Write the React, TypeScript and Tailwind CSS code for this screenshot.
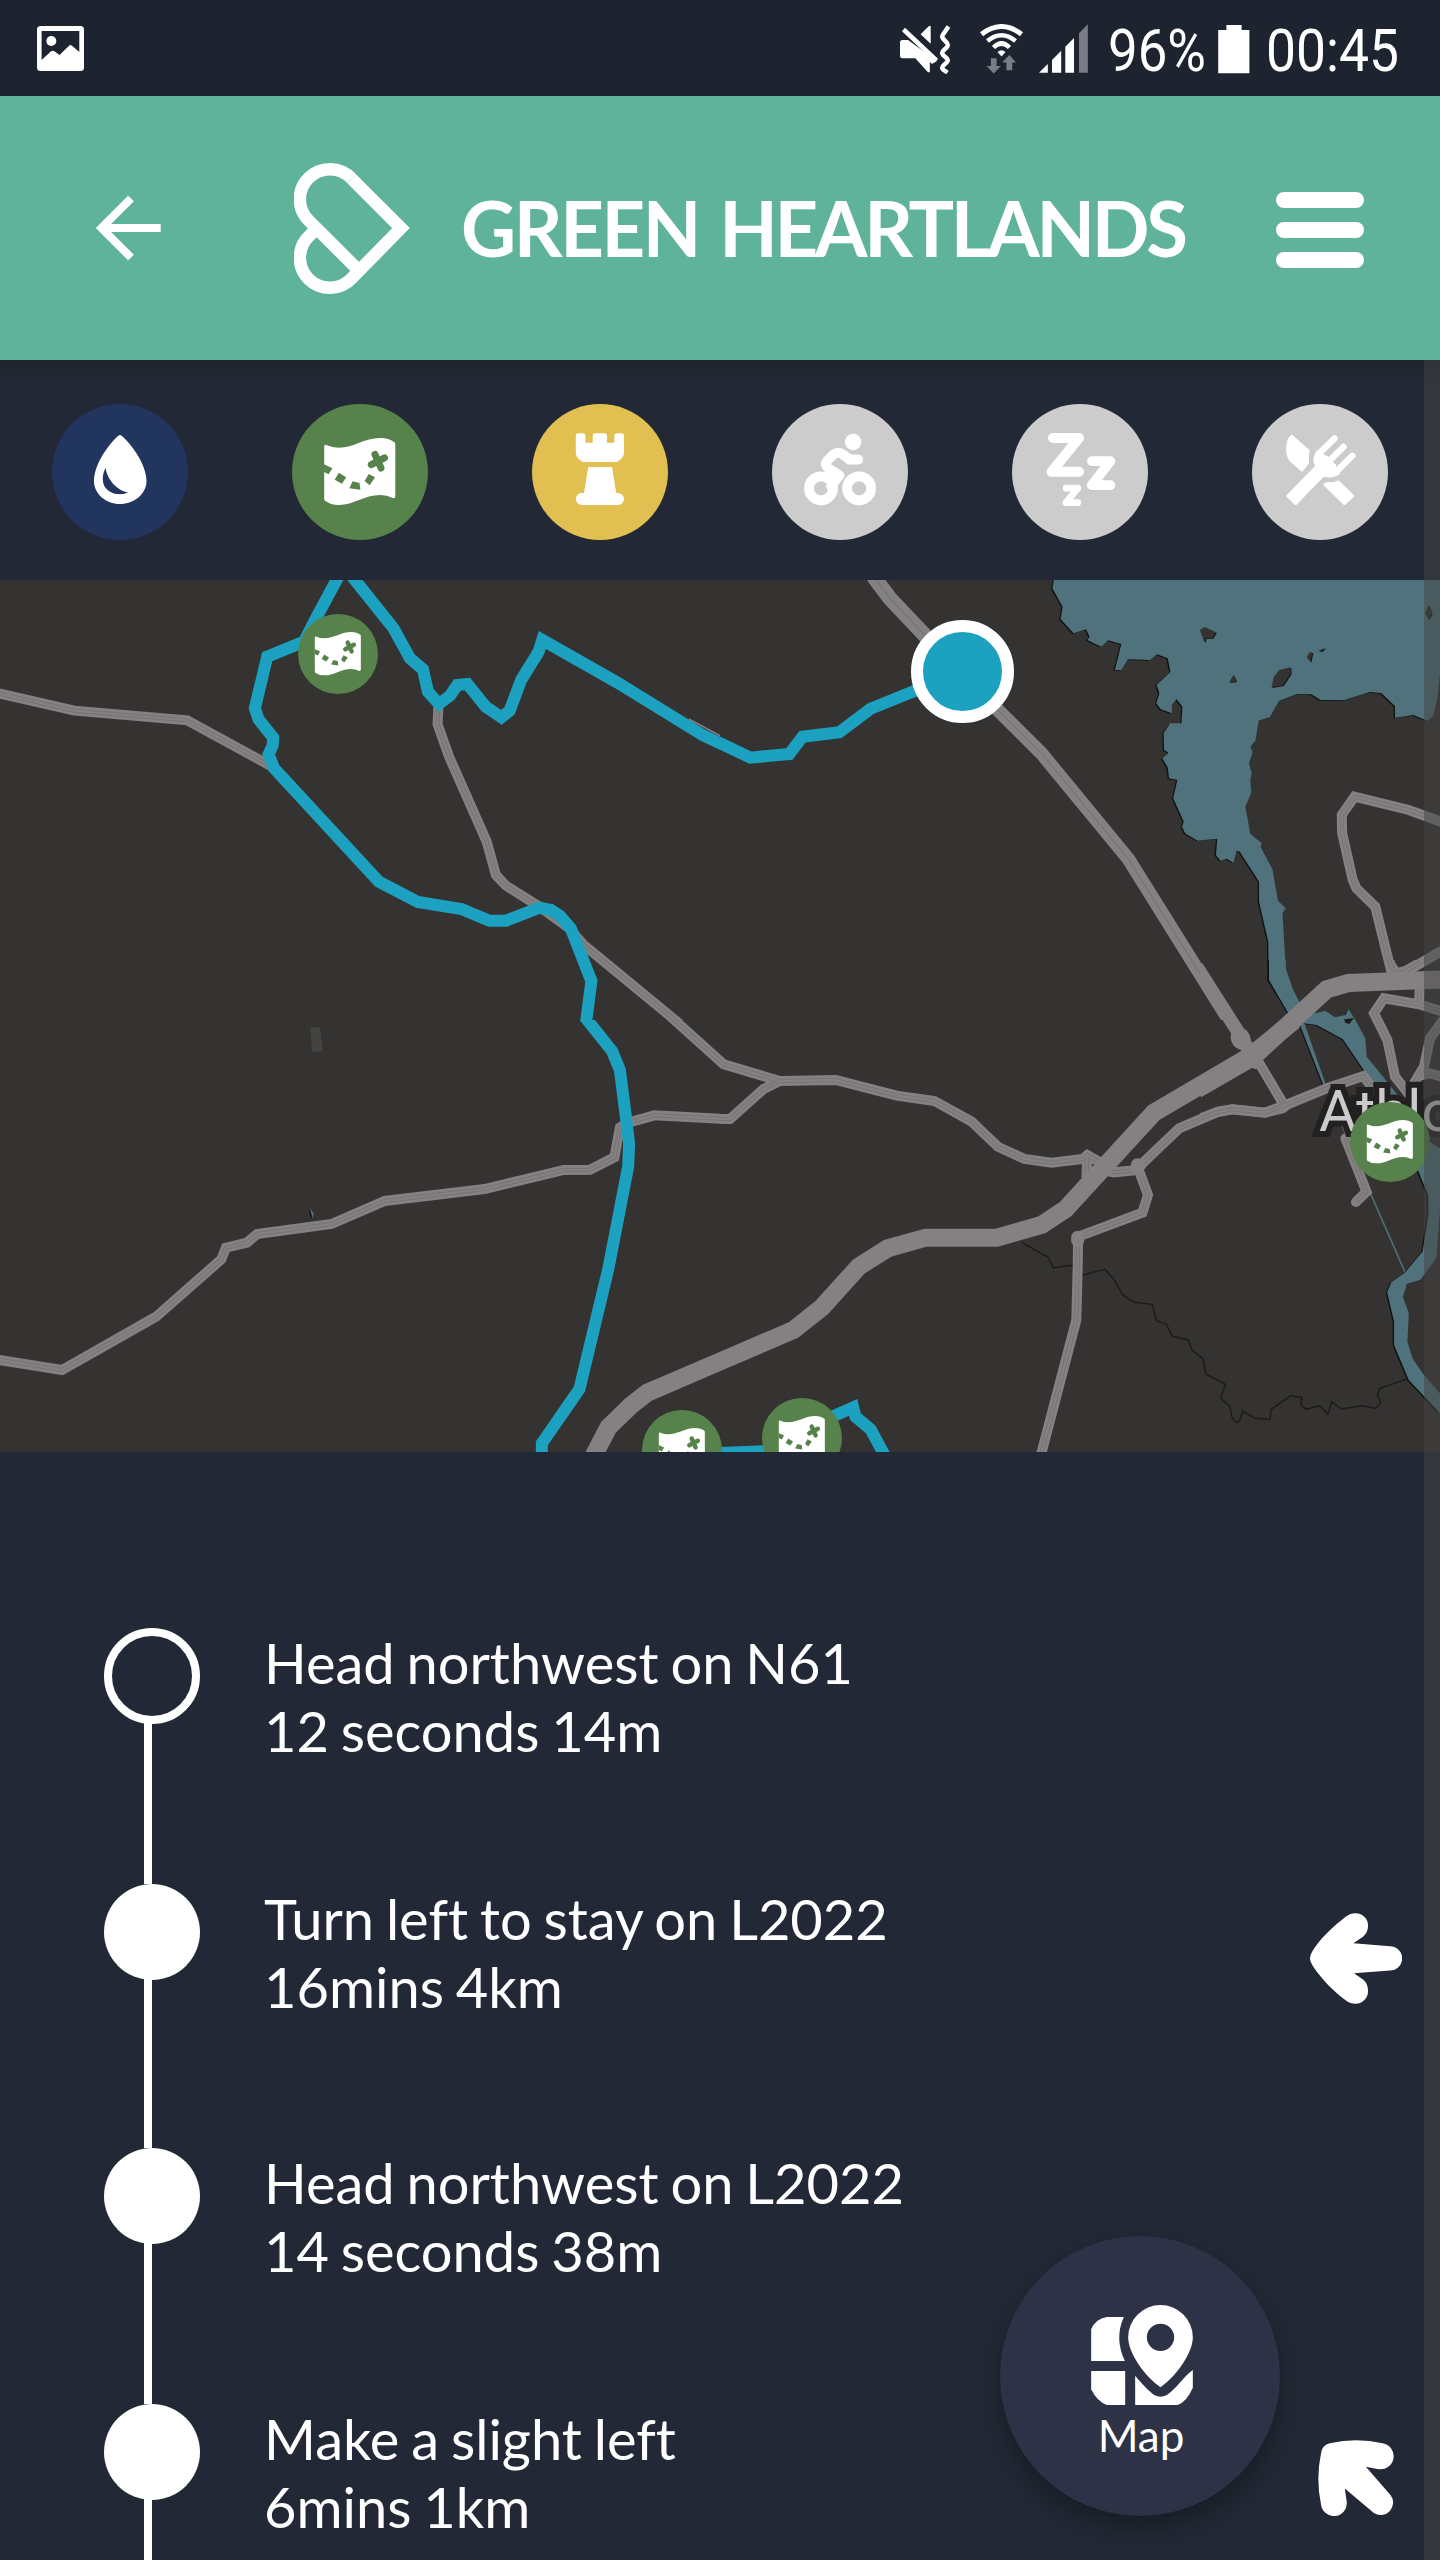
import React from "react";

type IconProps = { className?: string };

function DropIcon({ className }: IconProps) {
  return (
    <svg viewBox="0 0 136 136" className={className}>
      <path
        fillRule="evenodd"
        fill="#fff"
        d="M68 31C65 31 42 56 42 77C42 90 54 100 68 100S94.500 90 94.500 77C94.500 56 71 31 68 31ZM53.600 63.700C55 76 66 87 76.100 88.300C74 89.600 71 90.300 68 90.300C58 90.300 50.800 84 50.800 75.500C50.800 73 51 69 53.600 63.700Z"
      />
    </svg>
  );
}

function TreasureMapIcon({ className }: IconProps) {
  return (
    <svg viewBox="0 0 136 136" className={className}>
      <path
        fill="#fff"
        d="M32.200 42.500Q32.500 40 35 41.300Q40 43.700 46.800 43.700C62 43.700 72 34 88.200 34Q97 34 102.500 38.300Q103.300 39 103.300 40V92.500Q102.800 95.300 100.300 93.700Q95 91 88.200 91C72 91 62 101 46.800 101Q38.500 101 33 96.800Q32.200 96 32.200 95Z"
      />
      <g fill="#57824b">
        <path d="M32 60.300L40.400 64.300L36.700 70.300L32 68Z" />
        <path d="M46.800 68.700L54.200 73.300L50 79.700L42.700 75.700Z" />
        <path d="M60.600 77.300L67.500 79L68.400 85.700L57.400 84.300Z" />
        <path d="M76.700 70L83.100 73.300L77.600 81.300L72.600 77Z" />
      </g>
      <path
        d="M83 50.500L89 64M79.300 60.600L92.500 53.800"
        stroke="#57824b"
        strokeWidth="7"
        strokeLinecap="round"
        fill="none"
      />
    </svg>
  );
}

function RookIcon({ className }: IconProps) {
  return (
    <svg viewBox="0 0 136 136" className={className} fill="#fff">
      <path d="M43.800 32Q43.800 29.300 46.500 29.300H50.700Q53.400 29.300 53.400 32V38.700H60.700V32Q60.700 29.300 63.400 29.300H72.300Q75 29.300 75 32V38.700H82.300V32Q82.300 29.300 85 29.300H89.300Q92 29.300 92 32V49Q92 54 85 58H51Q43.800 54 43.800 49Z" />
      <path d="M56.200 63H80L84.200 89H86A6 6 0 0 1 86 101H49.800A6 6 0 0 1 49.800 89H52Z" />
    </svg>
  );
}

function CyclistIcon({ className }: IconProps) {
  return (
    <svg viewBox="0 0 136 136" className={className}>
      <circle cx="81.100" cy="38" r="8.300" fill="#fff" />
      <g fill="none" stroke="#fff" strokeWidth="9.800" strokeLinecap="round" strokeLinejoin="round">
        <circle cx="49" cy="84.300" r="12" />
        <circle cx="87.100" cy="84.300" r="12" />
        <path d="M86.300 55.500H77.500L70 49.700Q66 47.500 61.500 50.500L55 57Q52 61 56.500 64.500L67.500 71.500L59 82" />
      </g>
    </svg>
  );
}

function SleepIcon({ className }: IconProps) {
  return (
    <svg
      viewBox="0 0 136 136"
      className={className}
      fill="none"
      stroke="#fff"
      strokeLinecap="round"
      strokeLinejoin="round"
    >
      <path d="M41 34H67L39.500 67.800H67" strokeWidth="10" />
      <path d="M80 57.200H98.300L79.800 81.200H98.300" strokeWidth="9.800" />
      <path d="M54.300 84.200H65.800L54 98.600H65.800" strokeWidth="6.800" />
    </svg>
  );
}

function CutleryIcon({ className }: IconProps) {
  return (
    <svg viewBox="0 0 136 136" className={className} fill="#fff">
      <path d="M40.500 31L57.500 46Q56.500 52 57.100 59.300L50.500 67.500Q49.700 68 49 67L38.500 58Q34.100 53 34.100 46Q34.500 34 39 31Q40 30.500 40.500 31Z" />
      <path d="M71.300 80L75.400 78L81 78.300L86.500 76.300L101.500 90.800Q102.500 92 101.500 93L93.500 100.500Q92.400 101.500 91.300 100.500L71.300 81Z" />
      <path d="M34.800 91L63 62Q59 54 64.900 46.700L76.400 52.700L84 61L87.800 70Q81 75 71.800 72.700L44.800 100.500Q43.700 101.500 42.600 100.500L34.800 93Q34 92 34.800 91Z" />
      <g stroke="#fff" strokeWidth="6.400" strokeLinecap="round">
        <path d="M82.500 34.500L67 49.500M91.500 43L76 58M100.300 51.800L84.500 67.500" />
      </g>
    </svg>
  );
}

function MapPinIcon({ className }: IconProps) {
  return (
    <svg viewBox="333 315 305 300" className={className} fill="#fff">
      <path d="M333 388Q345 357 380 351H431Q402 415 434 483H333Z" />
      <path d="M333 513H435V615H380Q350 604 333 568Z" />
      <path d="M465 527C485 551 505 572 522 585Q541 596 560 585C590 565 615 525 638 510V563Q620 605 592 615H465Z" />
      <path
        fillRule="evenodd"
        d="M541 562C495 530 444 460 444 412A97 97 0 0 1 638 412C638 460 587 530 541 562ZM541 371A41 41 0 1 0 541 453A41 41 0 1 0 541 371Z"
      />
    </svg>
  );
}

function ArrowLeft() {
  return (
    <svg viewBox="60 68 276 272" className="h-[91px] w-[92px]" fill="#fff">
      <path d="M60 204Q60 190 75 170C100 135 130 108 168 78Q180 68 197 68A37 37 0 0 1 234 108Q234 124 220 138L190 158L300 167A36 36 0 0 1 300 240L192 248L220 268Q234 280 234 300A38 38 0 0 1 197 340Q180 340 168 330C130 302 100 270 75 236Q60 215 60 204Z" />
    </svg>
  );
}

function ArrowUpLeft() {
  return (
    <svg viewBox="1015 720 227 227" className="h-[76px] w-[76px]" fill="#fff">
      <path d="M1050 730Q1130 712 1208 730A38 38 0 0 1 1196 807L1158 800L1232 885A37 37 0 0 1 1182 938L1095 865L1101 905A38 38 0 0 1 1024 912Q1008 835 1024 760Q1028 735 1050 730Z" />
    </svg>
  );
}

function StatusBar() {
  return (
    <div className="flex h-24 items-start bg-[#1e2330] pl-[37px] pt-6 text-white">
      <svg viewBox="36.700 24 47 50" className="h-[50px] w-[47px]">
        <rect x="36.700" y="26" width="47" height="45" rx="3.500" fill="#fff" />
        <path d="M41.300 31H79V52L71.500 45.500Q70.200 44.500 69 45.500L59.200 55L54.500 51.500Q52.500 50 50.500 51.500L41.300 60Z" fill="#1e2330" />
        <circle cx="51" cy="41" r="5" fill="#fff" />
      </svg>
      <svg viewBox="900 24 52 50" className="ml-[816px] h-[50px] w-[52px]">
        <path d="M902.500 40H908L937 61L932 64L929.800 62V72.300H928L915.300 58.300H902.500Q900 58.300 900 56V42.500Q900 40 902.500 40Z" fill="#fff" />
        <path d="M903.500 29.500L936.500 60.500" stroke="#fff" strokeWidth="4.600" />
        <path d="M920.600 34.300L929 26H930.700V43.700Z" fill="#fff" />
        <path d="M948.500 26.500L943 34.500Q941.500 36.500 943 38.500L947 43Q948.500 45 947 47L943 51Q941.500 53 943 55L947 58.500Q948.500 60.500 947 62L943 66Q941.500 68 943 69.500L947.500 72.500" fill="none" stroke="#fff" strokeWidth="4.400" />
      </svg>
      <svg viewBox="979 24 45 50" className="ml-[27px] h-[50px] w-[45px]">
        <g fill="none" stroke="#fff">
          <path d="M981.500 34.300Q1001.500 18.800 1021.500 34.300" strokeWidth="5" />
          <path d="M987.500 41Q1001.500 29.500 1015.500 41" strokeWidth="4.500" />
          <path d="M993.500 47.500Q1001.500 39.500 1009.500 47.500" strokeWidth="4.500" />
        </g>
        <path d="M997.500 52Q1001.500 48.500 1005.500 52L1001.500 56.500Z" fill="#fff" />
        <path d="M990.900 58.300H996.600V66H1001L993.700 73.500L986.500 66H990.900Z" fill="#7a7d86" />
        <path d="M1006.400 70.300H1012.200V62.500H1016L1009.300 55L1002 62.500H1006.400Z" fill="#7a7d86" />
      </svg>
      <svg viewBox="1039 24 49 50" className="ml-[15px] h-[50px] w-[49px]" fill="#fff">
        <path d="M1039 72.700L1047.800 64V72.700Z" />
        <path d="M1052 60L1061.200 50.700V72.700H1052Z" />
        <path d="M1065.300 46.700L1074 38V72.700H1065.300Z" />
        <path d="M1079 33.200L1087.800 24.300V72.700H1079Z" fill="#7a7d86" />
      </svg>
      <span className="ml-5 mt-[-8px] block w-[110px] origin-left scale-x-[0.88] whitespace-nowrap font-['Roboto'] text-[60px] leading-[70px]">
        96%
      </span>
      <svg viewBox="1218 24 32 50" className="h-[50px] w-[32px]" fill="#fff">
        <path d="M1218.200 30H1226.400V25H1241.600V30H1249.400V73.300H1218.200Z" />
      </svg>
      <span className="ml-4 mt-[-8px] block w-[130px] origin-left scale-x-[0.89] whitespace-nowrap font-['Roboto'] text-[60px] leading-[70px]">
        00:45
      </span>
    </div>
  );
}

function Header() {
  return (
    <header className="flex h-[264px] items-center bg-[#60b39b] pl-24 text-white">
      <svg viewBox="96 196 65 64" className="h-16 w-[65px]" fill="none" stroke="#fff" strokeWidth="8">
        <path d="M131 198.500L101.500 228L131 257.500M103 228H160.700" />
      </svg>
      <svg viewBox="294 163 117 131" className="ml-[133px] h-[131px] w-[117px]" fill="none" stroke="#fff" strokeWidth="12.500">
        <path d="M351.800 178.800A30 30 0 1 0 309.400 221.200L359.100 270.900" />
        <path d="M351.800 178.800L401 228L351.800 278.200A30 30 0 1 1 309.400 235.800L315 230" />
      </svg>
      <h1 className="ml-[50px] w-[815px] shrink-0 whitespace-nowrap font-['Lato'] text-[76px] font-bold leading-[90px] tracking-[-3.300px] [word-spacing:5px]">
        <span className="tracking-[-2.400px]">GREEN</span> HEARTLANDS
      </h1>
      <div className="mt-1 flex w-[88px] shrink-0 flex-col gap-3.5">
        <div className="h-4 rounded-full bg-white" />
        <div className="h-4 rounded-full bg-white" />
        <div className="h-4 rounded-full bg-white" />
      </div>
    </header>
  );
}

const filters = [
  { name: "water", color: "bg-[#22355e]", Icon: DropIcon },
  { name: "trails", color: "bg-[#57824b]", Icon: TreasureMapIcon },
  { name: "castles", color: "bg-[#e1bf51]", Icon: RookIcon },
  { name: "cycling", color: "bg-[#cccccc]", Icon: CyclistIcon },
  { name: "sleep", color: "bg-[#cccccc]", Icon: SleepIcon },
  { name: "food", color: "bg-[#cccccc]", Icon: CutleryIcon },
];

function FilterBar() {
  return (
    <nav className="flex h-[220px] flex-col">
      <div className="h-5 bg-linear-to-b from-[#1e222c] to-[#222835]" />
      <div className="mt-6 flex justify-between px-[52px]">
        {filters.map(({ name, color, Icon }) => (
          <button key={name} aria-label={name} className={`size-[136px] rounded-full ${color}`}>
            <Icon className="size-[136px]" />
          </button>
        ))}
      </div>
    </nav>
  );
}

/* Geometry of one map tile; stroke widths are in screen pixels. */
function Line({ p, w, c, round }: { p: string; w: number; c: string; round?: boolean }) {
  return (
    <polyline
      points={p}
      fill="none"
      stroke={c}
      strokeWidth={w}
      strokeLinejoin="miter"
      strokeLinecap={round ? "round" : "butt"}
      vectorEffect="non-scaling-stroke"
    />
  );
}

const ROAD = "#848182";
const WATER = "#50727c";
const ROUTE = "#1ca2c0";

function Roads({ lines }: { lines: string[] }) {
  return (
    <g>
      {lines.map((p) => (
        <Line key={p} p={p} w={10} c={ROAD} round />
      ))}
      {lines.map((p) => (
        <Line key={p} p={p} w={4} c="#737071" />
      ))}
      {lines.map((p) => (
        <Line key={p} p={p} w={2.4} c={ROAD} />
      ))}
    </g>
  );
}

function Water({ p }: { p: string }) {
  return (
    <g>
      <polygon points={p} fill="#101313" transform="translate(-3 2)" />
      <polygon points={p} fill={WATER} />
    </g>
  );
}

function Tile({ x, y, children }: { x: number; y: number; children: React.ReactNode }) {
  return (
    <svg x={x} y={y} width="720" height="440" viewBox="0 0 1568 1320" preserveAspectRatio="none">
      {children}
    </svg>
  );
}

const islands = [
  "1045,150 1055,141 1080,157 1072,174 1058,174 1055,187",
  "1109,307 1118,285 1124,304",
  "1201,322 1206,290 1218,270 1242,262 1243,280 1226,316",
  "1278,232 1284,216 1290,218 1286,246",
  "1303,212 1318,203 1310,214",
  "1535,100 1543,76 1550,100 1543,118",
];

function MapCanvas() {
  return (
    <svg viewBox="0 580 1440 872" className="block h-[872px] w-[1440px]">
      <rect x="0" y="580" width="1440" height="872" fill="#353331" />
      <Tile x={0} y={580}>
        <Roads
          lines={[
            "-10,338 162,392 408,421 595,562",
            "955,370 953,433 978,530 1060,785 1080,885 1102,917 1175,980 1240,1045 1270,1093 1484,1336",
          ]}
        />
        <Line w={1.5} c={ROAD} p="1500,417 1590,483" />
        <Line
          w={12}
          c={ROUTE}
          p="745,-30 733,0 690,110 662,185 582,230 555,385 563,418 595,473 594,496 585,523 597,565 825,905 910,966 1005,987 1066,1022 1102,1022 1175,983 1200,990 1220,1008 1243,1045 1288,1203 1276,1330"
        />
        <Line
          w={12}
          c={ROUTE}
          p="760,-24 773,0 857,145 893,235 921,268 932,335 956,372 980,347 996,315 1018,312 1058,380 1092,412 1110,392 1135,300 1173,215 1181,180 1345,308 1530,465 1600,511"
        />
      </Tile>
      <Tile x={720} y={580}>
        <Water p="728,-10 724,25 746,80 742,118 770,160 797,148 805,170 800,180 830,200 845,181 874,192 860,270 874,270 888,238 936,240 952,223 975,235 981,275 951,315 957,340 950,370 960,388 984,400 984,375 994,357 1007,380 1005,430 980,430 966,460 967,510 977,518 963,535 975,562 978,595 996,600 987,655 1010,725 1006,740 1013,760 1040,782 1083,776 1080,825 1090,842 1103,836 1118,848 1125,812 1132,815 1174,905 1174,965 1194,1085 1195,1200 1240,1300 1262,1330 1310,1320 1262,1270 1247,1225 1232,1165 1225,1000 1232,985 1215,962 1203,868 1177,800 1180,790 1155,762 1144,680 1157,638 1155,600 1158,580 1152,550 1160,517 1155,500 1166,482 1173,422 1197,412 1217,363 1255,343 1288,343 1308,360 1360,360 1415,336 1440,339 1470,378 1470,413 1510,405 1540,422 1552,410 1562,360 1568,280 1568,-10" />
        {islands.map((p) => (
          <g key={p}>
            <polygon points={p} fill="#101313" transform="translate(2 2)" />
            <polygon points={p} fill="#353331" />
          </g>
        ))}
        <Line w={15} c={ROAD} p="330,-20 340,0 370,55 528,285" />
        <Line w={13.5} c={ROAD} p="528,285 700,520 890,838 1115,1335" />
        <Line w={1} c="#6f6d6d" p="330,-20 340,0 370,55 528,285 700,520 890,838 1115,1335" />
        <Roads
          lines={[
            "1590,735 1500,690 1382,650 1354,705 1355,760 1378,900 1386,925 1427,980 1462,1175",
            "1475,1180 1500,1170 1590,1098",
          ]}
        />
        <Line w={12} c={ROUTE} p="-38,465 -20,476 66,533 151,522 180,470 260,457 328,386 528,275" />
      </Tile>
      <Tile x={0} y={1020}>
        <polygon points="675,24 697,21 703,93 680,96" fill="#444342" />
        <Water p="675,565 683,580 681,596" />
        <Roads
          lines={[
            "-10,1018 135,1050 340,890 482,718 492,683 538,668 560,642 722,612 838,543 1055,507 1228,450 1285,449 1338,412 1350,322 1368,308 1425,286 1590,298",
            "1452,-20 1468,-1 1576,133 1698,183",
          ]}
        />
        <Line w={18} c={ROAD} p="1290,1315 1325,1222 1375,1155 1410,1118 1728,930" />
        <Line
          w={12}
          c={ROUTE}
          p="1276,-25 1276,-5 1333,93 1350,150 1363,290 1370,370 1368,440 1325,745 1262,1107 1180,1270 1180,1310"
        />
      </Tile>
      <Tile x={720} y={1020}>
        <Line
          w={1.5}
          c="#1d1c1b"
          p="658,668 715,712 726,744 763,736 775,745 790,765 838,748 857,776 877,825 902,847 941,853 951,903 972,912 985,949 1020,960 1028,990 1052,1017 1058,1062 1101,1093 1090,1135 1110,1158 1116,1195 1125,1208 1132,1203 1138,1173 1166,1195 1198,1198 1200,1168 1243,1127 1268,1133 1265,1153 1276,1168 1306,1157 1324,1183 1332,1146 1353,1167 1400,1157 1428,1165 1439,1148 1432,1125 1437,1105 1498,1076"
        />
        <Line w={1.5} c={WATER} p="1415,515 1492,757" />
        <Water p="1520,450 1533,495 1542,525 1543,580 1530,695 1490,760 1462,787 1453,817 1468,905 1468,975 1500,1080 1568,1180 1580,1140 1530,1060 1508,1015 1497,965 1500,880 1487,830 1496,792 1525,780 1560,715 1568,570 1568,385 1545,365 1520,400" />
        <Roads
          lines={[
            "-100,-1 8,133 130,183 252,180 385,227 467,243 548,305 605,380 663,417 722,428 790,417 800,405 825,425",
            "-20,297 22,297 95,207 130,183",
            "800,405 798,470",
            "850,455 857,457 910,450 920,430 1000,325 1085,275 1115,268 1187,278 1225,265",
            "905,440 912,450 932,525 920,578 780,650 779,740 776,900 698,1310",
            "1362,355 1408,515 1385,546",
          ]}
        />
        <Line w={13} c={ROAD} round p="779,652 779,662" />
        <Line w={13} c={ROAD} round p="909,434 909,446" />
        <Line
          w={18}
          c={ROAD}
          p="-158,1118 160,930 222,862 302,740 365,685 448,653 603,653 700,615 752,568 945,278 1155,108 1270,-20"
        />
        <Line w={12} c={ROUTE} p="0,1299 110,1293" />
        <Line w={12} c={ROUTE} p="220,1205 290,1162 295,1190 328,1228 362,1315" />
      </Tile>
      <svg x="1200" y="960" width="240" height="240" viewBox="0 0 720 720">
        <Water p="207,-10 207,60 268,165 300,188 350,195 428,237 495,335 570,430 610,470 650,470 598,412 545,345 500,290 496,235 463,175 445,147 437,165 405,172 375,152 345,160 298,125 278,90 257,30 257,-10" />
        <Water p="298,190 313,190 378,375 370,375" />
        <path d="M432 178L462 174L448 192L436 188Z" fill="#1b1b1a" />
        <Roads
          lines={[
            "565,-10 572,15 590,40 612,36 690,-10",
            "660,70 657,128",
            "730,155 657,133 552,115 522,160 562,240 585,350 625,400",
            "730,180 690,235 672,320 645,365 645,410",
            "730,352 690,340 665,345",
            "172,300 255,440",
            "-10,480 50,457 97,448 195,458 265,432 385,383 490,348 530,400",
          ]}
        />
        <Line w={13.5} c={ROAD} p="-10,20 25,75 120,225 155,285" />
        <Line w={19} c={ROAD} round p="120,232 124,240" />
        <Line w={14} c={ROAD} round p="167,300 168,306" />
        <Line w={18} c={ROAD} p="-10,388 160,290 380,88 445,69 730,58" />
        <Line w={1.5} c={ROAD} p="408,450 436,520" />
      </svg>
    </svg>
  );
}

function TrailMarker({ position }: { position: string }) {
  return (
    <div className={`absolute flex size-20 items-center justify-center rounded-full bg-[#57824b] ${position}`}>
      <TreasureMapIcon className="size-[88px] shrink-0" />
    </div>
  );
}

function MapView() {
  return (
    <section className="relative h-[872px] overflow-hidden">
      <MapCanvas />
      <span className="absolute left-[1319px] top-[496px] font-['Roboto'] text-[58px] leading-[70px] text-[#cbcbcb] [-webkit-text-stroke:12px_#222120] [paint-order:stroke_fill] [stroke-linejoin:round]">
        Athlone
      </span>
      <TrailMarker position="left-[298px] top-[34px]" />
      <TrailMarker position="left-[1350px] top-[522px]" />
      <TrailMarker position="left-[642px] top-[830px]" />
      <TrailMarker position="left-[762px] top-[818px]" />
      <div className="absolute left-[911px] top-10 size-[103px] rounded-full border-12 border-white bg-[#1ca2c0]" />
    </section>
  );
}

const steps = [
  { title: "Head northwest on N61", detail: "12 seconds 14m", height: "h-[256px]", dot: "border-8", arrow: null },
  { title: "Turn left to stay on L2022", detail: "16mins 4km", height: "h-[264px]", dot: "bg-white", arrow: <ArrowLeft /> },
  { title: "Head northwest on L2022", detail: "14 seconds 38m", height: "h-[256px]", dot: "bg-white", arrow: null },
  { title: "Make a slight left", detail: "6mins 1km", height: "h-[256px]", dot: "bg-white", arrow: <ArrowUpLeft /> },
];

function Directions() {
  return (
    <ol className="flex flex-col pl-[104px] pt-44 text-white">
      {steps.map(({ title, detail, height, dot, arrow }) => (
        <li key={title} className={`flex shrink-0 ${height}`}>
          <div className="flex w-24 shrink-0 flex-col">
            <div className={`size-24 shrink-0 rounded-full border-white ${dot}`} />
            <div className="-mt-0.5 ml-10 w-2 grow bg-white" />
          </div>
          <div className="ml-16 grow whitespace-nowrap pt-px font-['Lato'] text-[56px] leading-[68px] [font-variant-ligatures:none] [word-spacing:-2.500px]">
            <p>{title}</p>
            <p>{detail}</p>
          </div>
          <div className="mr-6 flex h-[148px] w-[120px] items-center justify-center">{arrow}</div>
        </li>
      ))}
    </ol>
  );
}

export default function App() {
  return (
    <div className="relative h-[2560px] w-[1440px] overflow-hidden bg-[#222835]">
      <StatusBar />
      <Header />
      <FilterBar />
      <MapView />
      <Directions />
      <button className="absolute left-[1000px] top-[2236px] flex size-[280px] flex-col items-center rounded-full bg-[#2d3246] pt-[69px] text-white shadow-[0_12px_24px_rgba(0,0,0,0.3)]">
        <MapPinIcon className="ml-1 h-[100px] w-[102px]" />
        <span className="ml-0.5 mt-1 font-['Lato'] text-[44px] leading-[52px]">Map</span>
      </button>
      <div className="absolute right-0 top-[360px] h-[2200px] w-4 bg-[#444444]/50" />
    </div>
  );
}
